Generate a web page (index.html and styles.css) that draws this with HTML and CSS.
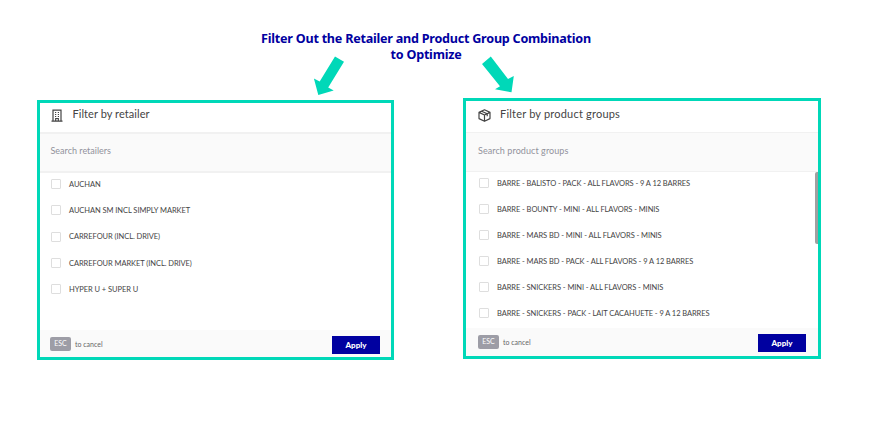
FILE: index.html
```html
<!DOCTYPE html>
<html lang="en">
<head>
<meta charset="utf-8">
<title>Filters</title>
<link rel="stylesheet" href="styles.css">
</head>
<body>
<h1>Filter Out the Retailer and Product Group Combination<br>to Optimize</h1>
<div class="arrows">
  <svg width="32" height="42" viewBox="313 55 32 42"><path d="M335 56.5 344 61.7 328.2 87.4 333.7 90.5 318.3 95 313.9 78.5 319.7 81.5Z"/></svg>
  <svg width="34" height="42" viewBox="481 55 34 42"><path d="M482 64 490.8 56.4 508 79 513.8 76 511.5 92.3 495 89.2 500 86.2Z"/></svg>
</div>
<main>
  <section class="panel retailers">
    <header>
      <svg class="icon" viewBox="0 0 12 13" fill="none" stroke="#444" stroke-width="1.2"><path d="M2 12V1.2h8V12M.5 12.2h11M4.7 12V9.5h2.6V12M4 3.5h1.2M6.8 3.5H8M4 5.5h1.2M6.8 5.5H8M4 7.5h1.2M6.8 7.5H8"/></svg>
      <h2>Filter by retailer</h2>
    </header>
    <div class="search">Search retailers</div>
    <ul>
      <li><i></i><span>AUCHAN</span></li>
      <li><i></i><span>AUCHAN SM INCL SIMPLY MARKET</span></li>
      <li><i></i><span>CARREFOUR (INCL. DRIVE)</span></li>
      <li><i></i><span>CARREFOUR MARKET (INCL. DRIVE)</span></li>
      <li><i></i><span>HYPER U + SUPER U</span></li>
    </ul>
    <footer><kbd>ESC</kbd><span>to cancel</span><button>Apply</button></footer>
  </section>
  <section class="panel products">
    <header>
      <svg class="icon" viewBox="0 0 13 13" fill="none" stroke="#444" stroke-width="1.2" stroke-linejoin="round"><path d="M6.5.8 12 3.4v6.2L6.5 12.3 1 9.6V3.4ZM1 3.4 6.5 6 12 3.4M6.5 6v6.3M3.6 2.2 9.2 4.8v2.4"/></svg>
      <h2>Filter by product groups</h2>
    </header>
    <div class="search">Search product groups</div>
    <ul>
      <li><i></i><span>BARRE - BALISTO - PACK - ALL FLAVORS - 9 A 12 BARRES</span></li>
      <li><i></i><span>BARRE - BOUNTY - MINI - ALL FLAVORS - MINIS</span></li>
      <li><i></i><span>BARRE - MARS BD - MINI - ALL FLAVORS - MINIS</span></li>
      <li><i></i><span>BARRE - MARS BD - PACK - ALL FLAVORS - 9 A 12 BARRES</span></li>
      <li><i></i><span>BARRE - SNICKERS - MINI - ALL FLAVORS - MINIS</span></li>
      <li><i></i><span>BARRE - SNICKERS - PACK - LAIT CACAHUETE - 9 A 12 BARRES</span></li>
    </ul>
    <div class="scrollbar"></div>
    <footer><kbd>ESC</kbd><span>to cancel</span><button>Apply</button></footer>
  </section>
</main>
</body>
</html>
```
FILE: styles.css
```css
* { box-sizing: border-box; }
body { margin: 0; height: 423px; overflow: hidden; background: #fff; font-family: Lato, sans-serif; color: #444; }
h1 { margin: 0; padding-top: 31px; width: 852px; height: 63px; text-align: center; font: 700 12.6px/15.5px "Noto Sans", sans-serif; letter-spacing: -.24px; color: #0000a0; }
.arrows { display: flex; gap: 136px; margin: -8px 0 0 313px; height: 42px; fill: #00d8b8; }
main { display: flex; align-items: flex-start; gap: 69px; padding-left: 37px; margin-top: 1px; }
.panel { position: relative; display: flex; flex-direction: column; width: 357px; height: 260px; border: 3px solid #00d8b8; margin-top: 2px; }
.products { width: 358px; height: 261px; margin-top: 0; }
header { display: flex; align-items: flex-start; height: 29px; padding-left: 11px; flex: none; }
.products header { height: 31px; padding-left: 12px; }
.icon { width: 12px; height: 13px; margin: 6px 9.5px 0 0; }
.products .icon { width: 13px; margin: 8px 9px 0 0; }
h2 { margin: 0; padding-top: 3px; font-weight: 400; font-size: 11px; line-height: 15px; letter-spacing: .06px; }
.products h2 { padding-top: 5px; letter-spacing: .2px; }
.search { flex: none; height: 41px; padding-left: 10.5px; border: solid #f1f1f1; border-width: 2px 0; background: #fafafa; color: #92929c; font-size: 9px; line-height: 34px; }
.products .search { height: 40px; border-width: 1px 0; padding-left: 12px; line-height: 36px; letter-spacing: .08px; }
ul { list-style: none; margin: -2px 0 0; padding: 0 0 0 11px; flex: 1; min-height: 0; overflow: hidden; }
.products ul { padding-left: 13px; }
li { display: flex; align-items: center; height: 26.3px; font-size: 7.5px; letter-spacing: -.06px; white-space: nowrap; }
.products li { height: 26.05px; letter-spacing: -.075px; }
li i { width: 10px; height: 10px; border: 1px solid #dedede; border-radius: 1px; margin-right: 8px; background: #fff; }
footer { display: flex; align-items: center; flex: none; height: 27px; padding: 0 11px 0 10px; background: #fafafa; font-size: 7px; color: #666; }
.products footer { height: 28px; padding: 0 12px; }
kbd { width: 21px; height: 14px; margin-right: 4px; border-radius: 2px; background: #9d9da6; color: #fff; font: 7px/13px Lato, sans-serif; text-align: center; }
button { margin-left: auto; width: 48px; height: 18px; border: 0; padding: 0; background: #0000a0; color: #fff; font: 900 8px/18px Lato, sans-serif; }
.retailers button { position: relative; top: 1px; }
.products button { position: relative; top: 1px; }
.scrollbar { position: absolute; right: 0; top: 71px; width: 3px; height: 72px; border-radius: 2px 0 0 2px; background: #a0a0a0; }
```
